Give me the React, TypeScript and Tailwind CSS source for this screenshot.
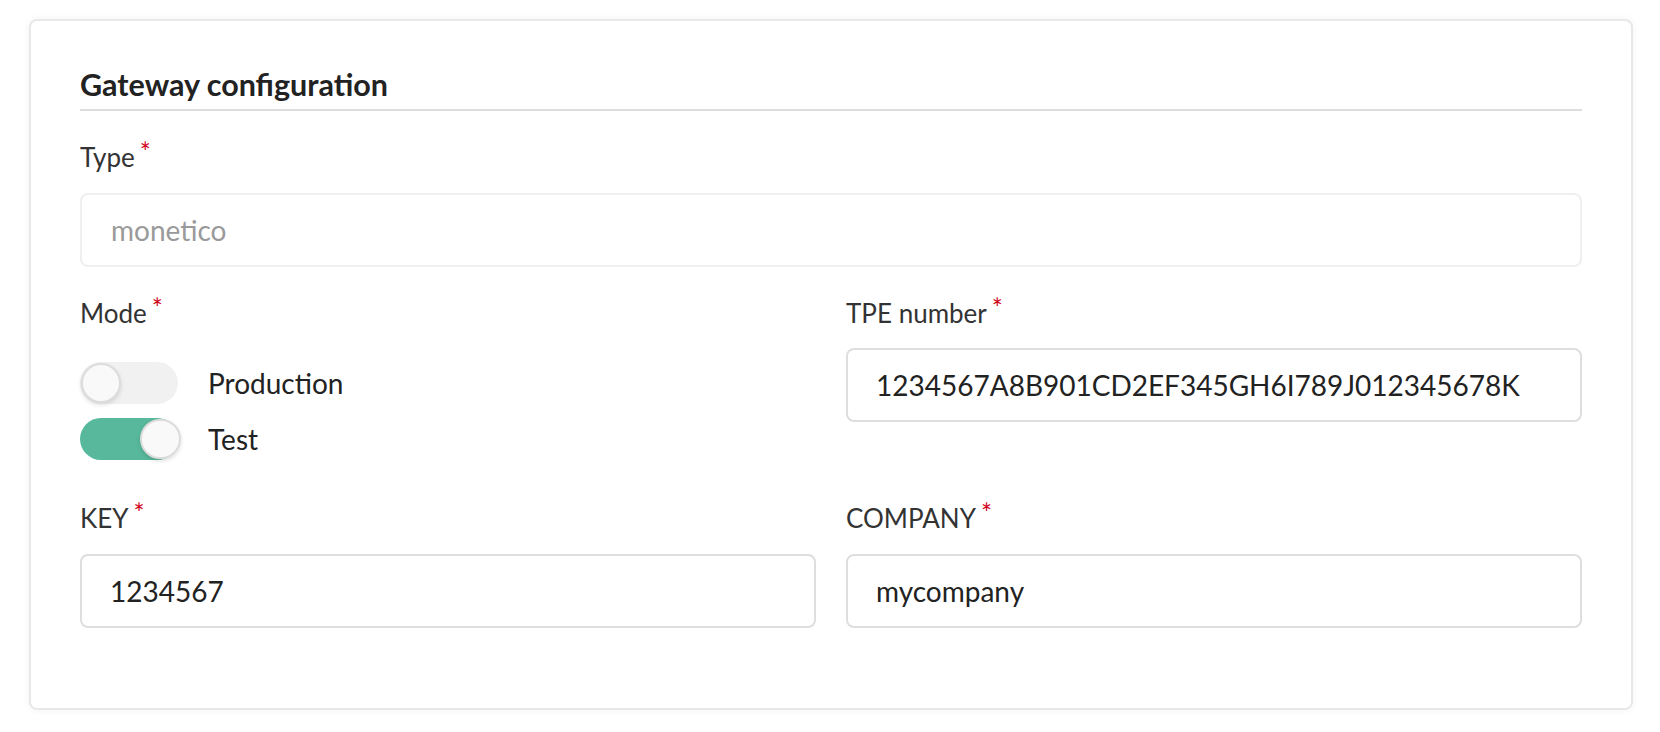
import React from 'react'

const font = { fontFamily: 'Lato, "Noto Sans", sans-serif' }

function Label({ children }: { children: React.ReactNode }) {
  return (
    <div className="flex items-start text-[26px] leading-[1.2] text-[#333]">
      <span>{children}</span>
      <span className="relative top-[-5px] ml-[5px] text-[26px] leading-[1.2] text-[#d0021b]">*</span>
    </div>
  )
}

function Field({ label, value, disabled }: { label: string; value: string; disabled?: boolean }) {
  return (
    <div>
      <Label>{label}</Label>
      <div
        className={
          disabled
            ? 'mt-[20px] flex h-[74px] items-center rounded-[8px] border-2 border-[#efefef] bg-white px-[29px] text-[28px] text-[#9a9a9a]'
            : 'mt-[19px] flex h-[74px] items-center rounded-[8px] border-2 border-[#dedede] bg-white px-[28px] text-[28px] text-[#222]'
        }
      >
        {value}
      </div>
    </div>
  )
}

function Toggle({ on, label }: { on: boolean; label: string }) {
  return (
    <div className="flex items-center gap-[30px]">
      <div
        className={
          on
            ? 'relative h-[42px] w-[98px] shrink-0 rounded-full bg-[#58b89b]'
            : 'relative h-[42px] w-[98px] shrink-0 rounded-full bg-[#f1f1f1]'
        }
      >
        <div
          className={
            on
              ? 'absolute left-[60px] top-[1px] h-[40px] w-[41px] rounded-full border-2 border-[#dcdcdc] bg-[#f9f9f9] shadow-[0_2px_4px_rgba(0,0,0,0.12)]'
              : 'absolute left-[1px] top-[1px] h-[40px] w-[40px] rounded-full border-2 border-[#dcdcdc] bg-[#f9f9f9] shadow-[0_2px_4px_rgba(0,0,0,0.12)]'
          }
        />
      </div>
      <span className="text-[28px] leading-[1.2] text-[#222]">{label}</span>
    </div>
  )
}

export default function App() {
  return (
    <div className="min-h-screen bg-white pt-[19px]" style={font}>
      <div className="ml-[29px] w-[1604px] rounded-[8px] border-2 border-[#e8e8e8] bg-white px-[49px] pb-[80px] pt-[45px] shadow-[0_0_8px_rgba(0,0,0,0.05)]">
        <h2 className="border-b-2 border-[#dddddd] pb-[7px] text-[30.5px] font-bold leading-[1.18] text-[#222]">
          Gateway configuration
        </h2>

        <div className="mt-[31px]">
          <Field label="Type" value="monetico" disabled />
        </div>

        <div className="mt-[31px] grid grid-cols-2 gap-x-[30px]">
          <div>
            <Label>Mode</Label>
            <div className="mt-[33px] flex flex-col gap-[14px]">
              <Toggle on={false} label="Production" />
              <Toggle on label="Test" />
            </div>
          </div>
          <Field label="TPE number" value="1234567A8B901CD2EF345GH6I789J012345678K" />
        </div>

        <div className="mt-[43px] grid grid-cols-2 gap-x-[30px]">
          <Field label="KEY" value="1234567" />
          <Field label="COMPANY" value="mycompany" />
        </div>
      </div>
    </div>
  )
}
